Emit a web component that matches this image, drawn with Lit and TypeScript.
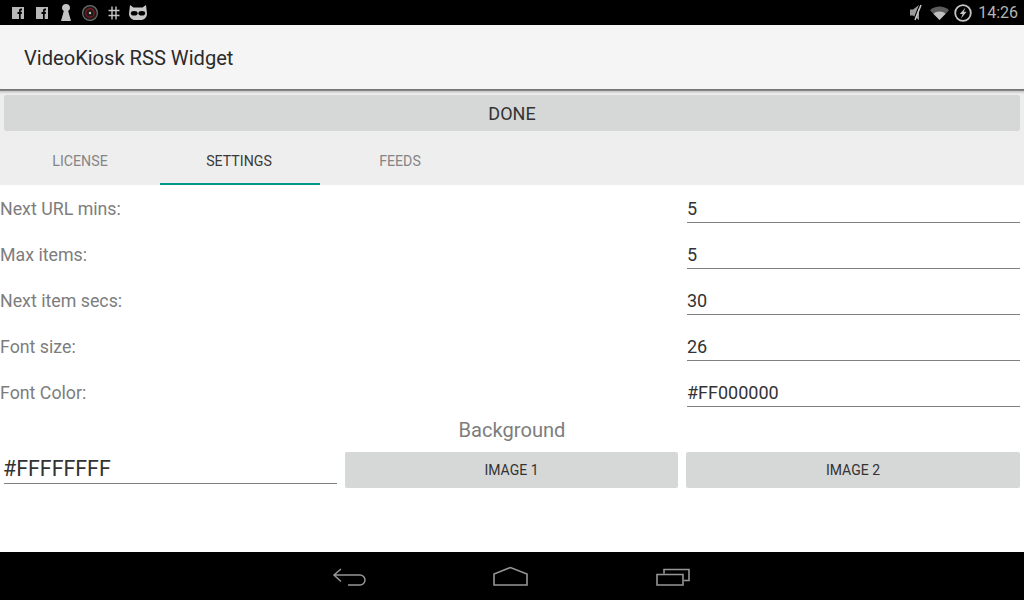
import { LitElement, html, css, svg } from "lit";
import { customElement } from "lit/decorators.js";

const rows = [
  ["Next URL mins:", "5"],
  ["Max items:", "5"],
  ["Next item secs:", "30"],
  ["Font size:", "26"],
  ["Font Color:", "#FF000000"],
];

@customElement("app-root")
export class AppRoot extends LitElement {
  static styles = css`
    :host { display: flex; flex-direction: column; width: 1024px; height: 600px; background: #fff; font-family: Roboto, sans-serif; overflow: hidden; }
    .status { height: 25px; flex: none; background: #000; display: flex; align-items: center; justify-content: space-between; box-sizing: border-box; padding: 0 6px 0 12px; }
    .status svg { display: block; }
    .left, .right { display: flex; align-items: center; }
    .clock { color: #b4b4b4; font-size: 16px; margin-left: 6px; line-height: 25px; }
    .bar { height: 64px; flex: none; background: #f5f5f5; display: flex; align-items: center; padding: 2px 0 0 24px; box-sizing: border-box; font-size: 20.1px; color: #2b2b2b; }
    .shadow { height: 2px; flex: none; background: linear-gradient(#6f6f6f, #8a8a8a); }
    .top { background: linear-gradient(#c4c4c4, #eee 3px); flex: none; height: 94px; display: flex; flex-direction: column; box-sizing: border-box; padding-top: 4px; }
    .done { height: 36px; margin: 0 4px; flex: none; background: #d6d7d7; border-radius: 2px; display: flex; align-items: center; justify-content: center; font-size: 18px; color: #333; }
    .tabs { display: flex; height: 46px; margin-top: 8px; }
    .tab { width: 160px; display: flex; align-items: center; justify-content: center; font-size: 14.2px; color: #858585; box-sizing: border-box; border-bottom: 2px solid transparent; }
    .tab.on { color: #3a3a3a; border-bottom-color: #009688; padding-right: 2px; }
    .content { flex: 1; display: flex; flex-direction: column; }
    .row { height: 46px; display: flex; box-sizing: border-box; }
    .label { flex: 1; font-size: 17.8px; color: #7d7d7d; line-height: 48px; }
    .field { width: 333px; margin-right: 4px; height: 38px; box-sizing: border-box; border-bottom: 1px solid #808080; font-size: 18px; color: #333; line-height: 48px; }
    .bgt { text-align: center; font-size: 20.1px; color: #7d7d7d; height: 37px; line-height: 30px; }
    .bgrow { display: grid; grid-template-columns: 333px 333px 334px; gap: 8px; padding: 0 4px; height: 36px; box-sizing: border-box; }
    .bgfield { font-size: 21.4px; color: #333; border-bottom: 1px solid #808080; height: 32px; line-height: 34px; box-sizing: border-box; text-indent: -1px; }
    .btn { background: #d6d7d7; border-radius: 2px; display: flex; align-items: center; justify-content: center; font-size: 14px; color: #333; }
    .nav { height: 48px; flex: none; background: #000; display: flex; align-items: center; padding-left: 331px; box-sizing: border-box; }
    .nav svg { display: block; flex: none; }
    .back { margin-right: 125px; }
    .home { margin-right: 127px; }
    .gap-13 { margin-left: 12px; }
    .gap-12 { margin-left: 13px; }
    .gap-11 { margin-left: 11px; }
    .gap-10 { margin-left: 10px; }
    .gap-9 { margin-left: 9px; }
    .gap-7 { margin-left: 7px; }
    .gap-5 { margin-left: 5px; }
  `;

  fb(cls = "") {
    return html`<svg class=${cls} width="12" height="12" viewBox="0 0 12 12"><rect width="12" height="12" fill="#b8b8b8"/><path d="M7 12V7H5.5V5H7V3.6C7 2.3 7.8 1.6 9 1.6H10V3.4H9.2C8.8 3.4 8.7 3.6 8.7 4V5H10L9.7 7H8.7V12Z" fill="#000"/></svg>`;
  }

  render() {
    return html`
      <div class="status">
        <div class="left">
          ${this.fb()}
          ${this.fb("gap-13")}
          <svg class="gap-12" width="10" height="17" viewBox="0 0 10 17"><path d="M5 0C7.4 0 9 1.7 9 3.8C9 5.3 8.3 6.3 7.2 7L10 17H0L2.8 7C1.7 6.3 1 5.3 1 3.8C1 1.7 2.6 0 5 0Z" fill="#c4c4c4"/></svg>
          <svg class="gap-11" width="16" height="16" viewBox="0 0 16 16"><circle cx="8" cy="8" r="7.4" fill="#1a1a1a" stroke="#6e6e6e" stroke-width="1.2"/><circle cx="8" cy="8" r="4.2" fill="none" stroke="#7c1a22" stroke-width="1.4"/><circle cx="8" cy="8" r="1.2" fill="#bbb"/></svg>
          <svg class="gap-10" width="12" height="14" viewBox="0 0 12 14"><path d="M4 0.5V13.5M8 0.5V13.5M0.5 4.5H11.5M0.5 9.5H11.5" stroke="#c4c4c4" stroke-width="1.4" fill="none"/></svg>
          <svg class="gap-9" width="18" height="15" viewBox="0 0 18 15"><path d="M1 0L4.5 2.5H13.5L17 0L18 8.5C18 12.5 15 15 12 15H6C3 15 0 12.5 0 8.5Z" fill="#c8c8c8"/><ellipse cx="5.2" cy="8.2" rx="3.4" ry="2.3" fill="#000"/><ellipse cx="12.8" cy="8.2" rx="3.4" ry="2.3" fill="#000"/></svg>
        </div>
        <div class="right">
          <svg width="15" height="17" viewBox="0 0 15 17"><path d="M2 5.5H5L11 1V16L5 11.5H2Z" fill="#9a9a9a"/><path d="M11.6 1L5.6 16" stroke="#000" stroke-width="1.2"/><path d="M13 1L7 16" stroke="#c8c8c8" stroke-width="1.5"/></svg>
          <svg class="gap-7" width="19" height="14" viewBox="0 0 19 14"><path d="M0 4.2C5 -0.8 14 -0.8 19 4.2L9.5 14Z" fill="#5c5c5c"/><path d="M3.4 7.7C6.6 4.6 12.4 4.6 15.6 7.7L9.5 14Z" fill="#c0c0c0"/></svg>
          <svg class="gap-5" width="18" height="18" viewBox="0 0 18 18"><circle cx="9" cy="9" r="7.8" fill="none" stroke="#c4c4c4" stroke-width="1.8"/><path d="M11.5 3.5L5.8 10H8.6L7 14.5L12.6 7.8H9.7Z" fill="#c4c4c4"/></svg>
          <span class="clock">14:26</span>
        </div>
      </div>
      <div class="bar">VideoKiosk RSS Widget</div>
      <div class="shadow"></div>
      <div class="top">
        <div class="done">DONE</div>
        <div class="tabs">
          <div class="tab">LICENSE</div>
          <div class="tab on">SETTINGS</div>
          <div class="tab">FEEDS</div>
        </div>
      </div>
      <div class="content">
        ${rows.map(([l, v]) => html`<div class="row"><div class="label">${l}</div><div class="field">${v}</div></div>`)}
        <div class="bgt">Background</div>
        <div class="bgrow">
          <div class="bgfield">#FFFFFFFF</div>
          <div class="btn">IMAGE 1</div>
          <div class="btn">IMAGE 2</div>
        </div>
      </div>
      <div class="nav">
        <svg class="back" width="36" height="20" viewBox="0 0 36 20">${svg`<path d="M3 9H29A5 5 0 0 1 29 19H17M10 3L3 9L10 15.5" fill="none" stroke="#969696" stroke-width="1.5"/>`}</svg>
        <svg class="home" width="36" height="20" viewBox="0 0 36 20">${svg`<path d="M2 19V8L18.5 1.5L35 8V19Z" fill="none" stroke="#969696" stroke-width="1.6"/>`}</svg>
        <svg width="36" height="20" viewBox="0 0 36 20">${svg`<path d="M2 8.5H28V19H2ZM9 7.5V3.5H34V14.5H29" fill="none" stroke="#969696" stroke-width="1.6"/>`}</svg>
      </div>
    `;
  }
}
